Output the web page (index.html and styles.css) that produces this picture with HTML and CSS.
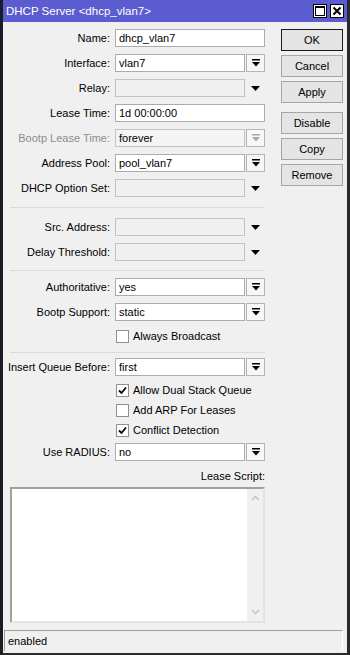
FILE: index.html
```html
<!DOCTYPE html>
<html lang="en">
<head>
    <meta charset="UTF-8">
    <title>DHCP Server &lt;dhcp_vlan7&gt;</title>
    <link rel="stylesheet" href="styles.css">
</head>
<body>
    <div class="window">
        <div class="titlebar">
            <span class="title">DHCP Server &lt;dhcp_vlan7&gt;</span>
            <span class="tb-buttons">
                <span class="tb-btn"><svg width="10" height="10" viewBox="0 0 10 10"><rect x="0.5" y="0.5" width="9" height="9" fill="none" stroke="#000" stroke-width="1"/><rect x="0" y="0" width="10" height="2" fill="#000"/></svg></span>
                <span class="tb-btn"><svg width="10" height="10" viewBox="0 0 10 10"><path d="M1.5 1.5 L8.5 8.5 M8.5 1.5 L1.5 8.5" stroke="#000" stroke-width="2"/></svg></span>
            </span>
        </div>

        <div class="content">
            <div class="form">
                <div class="row">
                    <label>Name:</label>
                    <div class="field">dhcp_vlan7</div>
                </div>
                <div class="row">
                    <label>Interface:</label>
                    <div class="field short">vlan7</div>
                    <span class="dd-btn"><svg width="8" height="8" viewBox="0 0 8 8"><rect x="0" y="0" width="8" height="1.5" fill="#000"/><polygon points="0,3 8,3 4,7.5" fill="#000"/></svg></span>
                </div>
                <div class="row">
                    <label>Relay:</label>
                    <div class="field short off"></div>
                    <span class="dd-arrow"><svg width="9" height="5" viewBox="0 0 9 5"><polygon points="0,0 9,0 4.5,5" fill="#000"/></svg></span>
                </div>
                <div class="row">
                    <label>Lease Time:</label>
                    <div class="field">1d 00:00:00</div>
                </div>
                <div class="row">
                    <label class="dim">Bootp Lease Time:</label>
                    <div class="field short grey">forever</div>
                    <span class="dd-btn"><svg width="8" height="8" viewBox="0 0 8 8"><rect x="0" y="0" width="8" height="1.5" fill="#a8a8a8"/><polygon points="0,3 8,3 4,7.5" fill="#a8a8a8"/></svg></span>
                </div>
                <div class="row">
                    <label>Address Pool:</label>
                    <div class="field short">pool_vlan7</div>
                    <span class="dd-btn"><svg width="8" height="8" viewBox="0 0 8 8"><rect x="0" y="0" width="8" height="1.5" fill="#000"/><polygon points="0,3 8,3 4,7.5" fill="#000"/></svg></span>
                </div>
                <div class="row">
                    <label>DHCP Option Set:</label>
                    <div class="field short off"></div>
                    <span class="dd-arrow"><svg width="9" height="5" viewBox="0 0 9 5"><polygon points="0,0 9,0 4.5,5" fill="#000"/></svg></span>
                </div>

                <div class="sep sep-a"></div>

                <div class="row first">
                    <label>Src. Address:</label>
                    <div class="field short off"></div>
                    <span class="dd-arrow"><svg width="9" height="5" viewBox="0 0 9 5"><polygon points="0,0 9,0 4.5,5" fill="#000"/></svg></span>
                </div>
                <div class="row">
                    <label>Delay Threshold:</label>
                    <div class="field short off"></div>
                    <span class="dd-arrow"><svg width="9" height="5" viewBox="0 0 9 5"><polygon points="0,0 9,0 4.5,5" fill="#000"/></svg></span>
                </div>

                <div class="sep sep-b"></div>

                <div class="row">
                    <label>Authoritative:</label>
                    <div class="field short">yes</div>
                    <span class="dd-btn"><svg width="8" height="8" viewBox="0 0 8 8"><rect x="0" y="0" width="8" height="1.5" fill="#000"/><polygon points="0,3 8,3 4,7.5" fill="#000"/></svg></span>
                </div>
                <div class="row">
                    <label>Bootp Support:</label>
                    <div class="field short">static</div>
                    <span class="dd-btn"><svg width="8" height="8" viewBox="0 0 8 8"><rect x="0" y="0" width="8" height="1.5" fill="#000"/><polygon points="0,3 8,3 4,7.5" fill="#000"/></svg></span>
                </div>
                <div class="check-row cb-broadcast">
                    <span class="box"></span>
                    <span>Always Broadcast</span>
                </div>

                <div class="sep sep-c"></div>

                <div class="row first-q">
                    <label>Insert Queue Before:</label>
                    <div class="field short">first</div>
                    <span class="dd-btn"><svg width="8" height="8" viewBox="0 0 8 8"><rect x="0" y="0" width="8" height="1.5" fill="#000"/><polygon points="0,3 8,3 4,7.5" fill="#000"/></svg></span>
                </div>
                <div class="check-row cb-first">
                    <span class="box"><svg width="9" height="9" viewBox="0 0 9 9"><path d="M1 4.5 L3.5 7 L8 1.5" fill="none" stroke="#000" stroke-width="1.8"/></svg></span>
                    <span>Allow Dual Stack Queue</span>
                </div>
                <div class="check-row">
                    <span class="box"></span>
                    <span>Add ARP For Leases</span>
                </div>
                <div class="check-row">
                    <span class="box"><svg width="9" height="9" viewBox="0 0 9 9"><path d="M1 4.5 L3.5 7 L8 1.5" fill="none" stroke="#000" stroke-width="1.8"/></svg></span>
                    <span>Conflict Detection</span>
                </div>
                <div class="row radius">
                    <label>Use RADIUS:</label>
                    <div class="field short">no</div>
                    <span class="dd-btn"><svg width="8" height="8" viewBox="0 0 8 8"><rect x="0" y="0" width="8" height="1.5" fill="#000"/><polygon points="0,3 8,3 4,7.5" fill="#000"/></svg></span>
                </div>

                <div class="script-label">Lease Script:</div>
                <div class="script">
                    <div class="script-text"></div>
                    <div class="scrollbar">
                        <svg width="9" height="6" viewBox="0 0 9 6"><path d="M1 5 L4.5 1.5 L8 5" fill="none" stroke="#c2c2c2" stroke-width="1.5"/></svg>
                        <svg width="9" height="6" viewBox="0 0 9 6"><path d="M1 1 L4.5 4.5 L8 1" fill="none" stroke="#c2c2c2" stroke-width="1.5"/></svg>
                    </div>
                </div>
            </div>

            <div class="actions">
                <button class="default">OK</button>
                <button>Cancel</button>
                <button>Apply</button>
                <button class="group">Disable</button>
                <button>Copy</button>
                <button>Remove</button>
            </div>
        </div>

        <div class="statusbar">enabled</div>
    </div>
</body>
</html>
```

FILE: styles.css
```css
body {
    margin: 0;
    font-family: 'Liberation Sans', Arial, sans-serif;
    font-size: 11px;
    color: #000;
    background: #1d1d2b;
}
.window {
    width: 350px;
    height: 655px;
    box-sizing: border-box;
    border-left: 3px solid #1c1c24;
    border-right: 3px solid #2a2a2a;
    border-bottom: 2px solid #2a2a2a;
    background: #f0f0f0;
    display: flex;
    flex-direction: column;
}
.titlebar {
    height: 22px;
    background: #5c5cd1;
    color: #fff;
    display: flex;
    align-items: center;
    justify-content: space-between;
    padding: 0 3px 0 3px;
    font-size: 11.5px;
}
.titlebar .tb-buttons {
    display: flex;
    gap: 3px;
}
.titlebar .tb-btn {
    width: 14px;
    height: 14px;
    box-sizing: border-box;
    border: 1px solid #000;
    background: #fff;
    display: flex;
    align-items: center;
    justify-content: center;
}
.content {
    flex: 1;
    display: flex;
}
.form {
    width: 262px;
    flex-shrink: 0;
}
.row {
    display: flex;
    align-items: center;
    height: 18px;
    margin-top: 7px;
}
.row label {
    width: 112px;
    flex-shrink: 0;
    box-sizing: border-box;
    padding-right: 5px;
    text-align: right;
    white-space: nowrap;
}
.row label.dim {
    color: #8d8d8d;
}
.field {
    width: 150px;
    height: 18px;
    box-sizing: border-box;
    border: 1px solid #acacac;
    background: #fff;
    padding-left: 3px;
    line-height: 16px;
    white-space: nowrap;
}
.field.short {
    width: 130px;
}
.field.off {
    background: #f0f0f0;
    border-color: #c3c3c3;
}
.field.grey {
    background: #f4f4f4;
    border-color: #c3c3c3;
}
.dd-btn {
    width: 19px;
    height: 18px;
    margin-left: 1px;
    box-sizing: border-box;
    border: 1px solid #b4b4b4;
    background: #f7f7f7;
    display: flex;
    align-items: center;
    justify-content: center;
}
.dd-arrow {
    width: 19px;
    margin-left: 1px;
    display: flex;
    justify-content: center;
}
.sep {
    height: 1px;
    width: 255px;
    margin-left: 7px;
    background: #dadada;
}
.sep-a {
    margin-top: 10px;
}
.row.first {
    margin-top: 10px;
}
.sep-b {
    margin-top: 9px;
}
.check-row {
    display: flex;
    align-items: center;
    height: 20px;
    padding-left: 113px;
    gap: 4px;
}
.cb-broadcast {
    margin-top: 5px;
}
.sep-c {
    margin-top: 6px;
}
.row.first-q {
    margin-top: 5px;
}
.cb-first {
    margin-top: 4px;
}
.row.radius {
    margin-top: 3px;
}
.check-row .box {
    width: 13px;
    height: 13px;
    box-sizing: border-box;
    border: 1px solid #8e8f8f;
    background: #fff;
    display: flex;
    align-items: center;
    justify-content: center;
}
.script-label {
    height: 14px;
    margin-top: 8px;
    text-align: right;
    line-height: 14px;
}
.script {
    margin-top: 4px;
    margin-left: 7px;
    width: 255px;
    height: 136px;
    box-sizing: border-box;
    border-top: 2px solid #a0a0a0;
    border-left: 2px solid #a0a0a0;
    border-right: 2px solid #e3e3e3;
    border-bottom: 2px solid #e3e3e3;
    background: #fff;
    display: flex;
}
.script-text {
    flex: 1;
}
.scrollbar {
    width: 16px;
    background: #f0f0f0;
    display: flex;
    flex-direction: column;
    justify-content: space-between;
    align-items: center;
    padding: 6px 0 6px 0;
}
.actions {
    margin-left: 16px;
    display: flex;
    flex-direction: column;
    gap: 4px;
    padding-top: 7px;
}
.actions button {
    width: 62px;
    height: 22px;
    font-family: 'Liberation Sans', Arial, sans-serif;
    font-size: 11px;
    color: #000;
    background: #e4e4e4;
    border: 1px solid #a6a6a6;
    padding: 0;
}
.actions button.default {
    border-color: #1a1a1a;
}
.actions button.group {
    margin-top: 5px;
}
.statusbar {
    height: 21px;
    width: 339px;
    margin: 0 0 2px 1px;
    box-sizing: border-box;
    border-top: 1px solid #a0a0a0;
    border-left: 1px solid #a0a0a0;
    border-right: 1px solid #fff;
    padding-left: 3px;
    line-height: 20px;
}
```
